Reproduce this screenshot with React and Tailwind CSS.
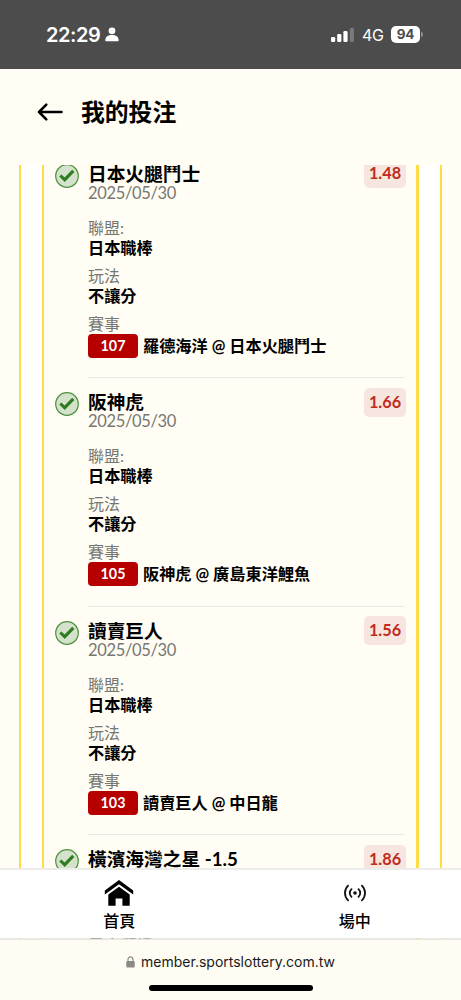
import React from 'react';

const bets = [
  { team: '日本火腿鬥士', odds: '1.48', code: '107', match: '羅德海洋 @ 日本火腿鬥士' },
  { team: '阪神虎', odds: '1.66', code: '105', match: '阪神虎 @ 廣島東洋鯉魚' },
  { team: '讀賣巨人', odds: '1.56', code: '103', match: '讀賣巨人 @ 中日龍' },
  { team: '橫濱海灣之星 -1.5', odds: '1.86' },
];

const StatusBar = () => (
  <div className="flex h-[69px] shrink-0 items-center justify-between bg-[#4c4c4c] pl-[46px] pr-[38px] text-white font-['Inter',sans-serif]">
    <div className="flex items-center gap-[5px]">
      <span className="text-[20px] leading-6 font-semibold tracking-[-0.45px]">22:29</span>
      <svg width="14" height="15" viewBox="0 0 14 15" fill="currentColor">
        <circle cx="7" cy="3.8" r="3.4" />
        <path d="M.3 13.2C.3 10 3.2 8.1 7 8.1s6.7 1.9 6.7 5.1c0 .8-.4 1.1-1.1 1.1H1.4c-.7 0-1.1-.3-1.1-1.1Z" />
      </svg>
    </div>
    <div className="flex items-center">
      <svg width="24" height="16" viewBox="0 0 24 16" fill="currentColor">
        <rect x="0" y="10" width="4.2" height="5" rx="1.2" />
        <rect x="6.2" y="7" width="4.2" height="8" rx="1.2" />
        <rect x="12.4" y="4" width="4.2" height="11" rx="1.2" />
        <rect x="18.8" y="1" width="4.2" height="14" rx="1.2" opacity=".25" />
      </svg>
      <span className="ml-[7px] w-[23px] text-[16px] leading-5 tracking-[-0.4px]">4G</span>
      <span className="ml-[6px] mr-[1px] flex h-[17px] w-[29px] items-center justify-center rounded-[5px] bg-white text-[13.5px] font-bold leading-none tracking-[-0.2px] text-[#4c4c4c]">
        94
      </span>
      <span className="h-[5px] w-[2px] rounded-r-full bg-[#8c8c8c]" />
    </div>
  </div>
);

const CheckBadge = () => (
  <svg width="24" height="24" viewBox="0 0 24 24" fill="none">
    <circle cx="12" cy="12" r="11.3" fill="#d5e2cb" stroke="#4c9040" strokeWidth="1.2" />
    <path d="m5.3 11.5 4.4 4.2 8.6-8.9" stroke="#2f7d20" strokeWidth="3.1" />
  </svg>
);

const Field = ({ label, value }) => (
  <div className="mb-2">
    <div className="text-[16px] leading-5 text-[#777772]">{label}</div>
    <div className="text-[16.2px] leading-5 font-bold">{value}</div>
  </div>
);

const BetItem = ({ bet }) => (
  <div className="flex h-[228.5px] shrink-0 pl-[11px] pr-[12px]">
    <div className="w-[33px] shrink-0 pt-[14px]">
      <CheckBadge />
    </div>
    <div className="flex-1 border-b-[1.5px] border-[#eae8e2] pt-[12px]">
      <div className="flex h-6 justify-between">
        <h2 className="whitespace-nowrap text-[18.7px] leading-6 font-bold">{bet.team}</h2>
        <div className="-mr-[2px] -mt-[2.5px] flex h-[29px] w-[42px] items-center justify-center rounded-[5px] bg-[#f7e6df] text-[16.3px] font-bold text-[#bf2c20]">
          {bet.odds}
        </div>
      </div>
      <div className="mb-[18px] text-[16.5px] leading-[14px] tracking-[-0.35px] text-[#777772]">2025/05/30</div>
      <Field label="聯盟:" value="日本職棒" />
      {bet.match && (
        <>
          <Field label="玩法" value="不讓分" />
          <div className="text-[16px] leading-5 text-[#777772]">賽事</div>
          <div className="flex items-center gap-[5px]">
            <span className="flex h-6 w-[50px] items-center justify-center rounded-[4px] bg-[#b60000] text-[14.3px] font-bold text-white">
              {bet.code}
            </span>
            <span className="whitespace-nowrap text-[16.2px] leading-6 font-bold">{bet.match}</span>
          </div>
        </>
      )}
    </div>
  </div>
);

const BottomNav = () => (
  <nav className="absolute inset-x-0 top-[868px] grid h-[70px] grid-cols-2 border-t-2 border-[#ececea] bg-white text-[16px] font-medium shadow-[0_1px_0_rgba(230,228,222,0.75)]">
    <a className="flex flex-col items-center pl-[8px] pt-[9px]">
      <svg width="30" height="28" viewBox="0 0 30 28" fill="#000">
        <path d="M15 1 .8 11.4v4.1L15 5.3l14.2 10.2v-4.1Z" />
        <path d="M15 7.7 4.3 15.5v11.2h7.3v-7.2h6.8v7.2h7.3V15.5Z" />
      </svg>
      <span className="mt-[2px] leading-6">首頁</span>
    </a>
    <a className="flex flex-col items-center pl-[18px] pt-[13px]">
      <svg width="22" height="20" viewBox="0 0 22 20" fill="none" stroke="#111" strokeWidth="1.8" strokeLinecap="round">
        <circle cx="11" cy="10" r="1.8" fill="#111" stroke="none" />
        <path d="M7.5 6.1a5.3 5.3 0 0 0 0 7.8M14.5 6.1a5.3 5.3 0 0 1 0 7.8M4.1 2.6a10.3 10.3 0 0 0 0 14.8M17.9 2.6a10.3 10.3 0 0 1 0 14.8" />
      </svg>
      <span className="mt-[6px] leading-6">場中</span>
    </a>
  </nav>
);

const AddressBar = () => (
  <div className="flex flex-1 flex-col items-center border-t border-[#e6e5df] bg-[#fefcf3] pt-3">
    <div className="flex items-center gap-[6px] font-['Inter',sans-serif] text-[14px] leading-5 text-[#1a1a1a]">
      <svg width="9" height="12" viewBox="0 0 9 12">
        <rect x=".3" y="5" width="8.4" height="6.6" rx="1.2" fill="#8a8a86" />
        <path d="M2 5.5V3.4a2.5 2.5 0 0 1 5 0v2.1" fill="none" stroke="#8a8a86" strokeWidth="1.2" />
      </svg>
      <span>member.sportslottery.com.tw</span>
    </div>
    <div className="mt-[13px] h-[6px] w-[164px] rounded-full bg-black" />
  </div>
);

const App = () => {
  return (
    <div className="relative flex h-[1000px] w-[461px] flex-col overflow-hidden bg-[#fffdf4] text-black font-['Lato','Noto_Sans_CJK_TC',sans-serif]">
      <StatusBar />

      <header className="flex h-[96px] shrink-0 items-center gap-[18px] pb-[10px] pl-[37px]">
        <svg width="26" height="20" viewBox="0 0 26 20" fill="none" stroke="#000" strokeWidth="2.5" strokeLinecap="round" strokeLinejoin="round">
          <path d="M9.3 2.7 2 10l7.3 7.3M2 10h22.5" />
        </svg>
        <h1 className="text-[23.8px] leading-8 font-bold">我的投注</h1>
      </header>

      {/* Bet slip, scrolled part way down */}
      <main className="h-[774px] shrink-0 overflow-hidden pl-[19px] pr-[19px]">
        <div className="h-full border-x-2 border-[#ffdb45] bg-white px-[21px]">
          <div className="h-full overflow-hidden border-l-2 border-r-[3px] border-[#ffdb45] bg-[#fffdf4]">
            <div className="-mt-[15.5px] flex flex-col">
              {bets.map((bet) => (
                <BetItem key={bet.team} bet={bet} />
              ))}
            </div>
          </div>
        </div>
      </main>

      <BottomNav />
      <AddressBar />
    </div>
  );
};

export default App;
